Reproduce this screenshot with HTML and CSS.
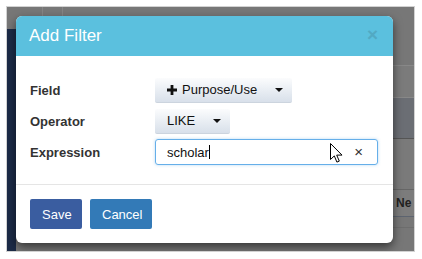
FILE: index.html
```html
<!DOCTYPE html>
<html lang="en">
<head>
    <meta charset="UTF-8">
    <title>Add Filter</title>
    <link rel="stylesheet" href="styles.css">
</head>
<body>
<div class="screen">
    <div class="page">
        <div class="side"></div>
        <div class="main">
            <div class="cols"><span></span><span></span></div>
            <div class="band band-a"></div>
            <div class="band band-b"></div>
            <div class="band band-c"></div>
            <div class="band band-d"></div>
            <div class="band band-e"><span class="cell">Ne</span></div>
            <div class="band band-f"></div>
        </div>
    </div>

    <div class="modal">
        <div class="modal-header">
            <h4>Add Filter</h4>
            <span class="close">&times;</span>
        </div>

        <div class="modal-body">
            <div class="row">
                <label>Field</label>
                <button class="dd">
                    <svg class="plus" width="10" height="10" viewBox="0 0 10 10"><path d="M3.6 0h2.8v3.6H10v2.8H6.4V10H3.6V6.4H0V3.6h3.6z" fill="#111"/></svg>
                    Purpose/Use <span class="caret"></span>
                </button>
            </div>
            <div class="row">
                <label>Operator</label>
                <button class="dd">LIKE <span class="caret"></span></button>
            </div>
            <div class="row">
                <label>Expression</label>
                <div class="input">
                    <span>scholar</span><span class="text-cursor"></span>
                    <span class="clear">&times;</span>
                    <svg class="pointer" width="13" height="20" viewBox="0 0 13 20"><path d="M0.5 0.5v16l3.8-3.6 2.6 6.2 2.4-1-2.6-6h5.3z" fill="#fff" stroke="#000" stroke-width="1"/></svg>
                </div>
            </div>
        </div>

        <div class="modal-footer">
            <button class="btn save">Save</button>
            <button class="btn cancel">Cancel</button>
        </div>
    </div>
</div>
</body>
</html>
```

FILE: styles.css
```css
body {
    margin: 0;
    background: #fff;
    font-family: "Liberation Sans", Arial, sans-serif;
}

.screen {
    position: relative;
    width: 409px;
    height: 246px;
    margin: 6px 0 0 6px;
    border: 1px solid #d2d2d2;
    box-sizing: border-box;
    overflow: hidden;
}

.page {
    display: flex;
    height: 100%;
    background: #777;
}

.side {
    width: 9px;
    margin-top: 22px;
    background: #1c2b47;
}

.main {
    flex: 1;
    display: flex;
    flex-direction: column;
}

.cols {
    height: 10px;
    display: flex;
    gap: 19px;
    padding-left: 26px;
}

.cols span {
    width: 1px;
    background: #858585;
}

.band {
    border-bottom: 1px solid #888;
}

.band-a { height: 48px; }
.band-b { height: 31px; background: #7b7b7b; }
.band-c { height: 40px; background: #6b6e74; border-bottom-color: #555; }
.band-d { height: 50px; background: #7a7a7a; border-bottom-color: #666; }

.band-e {
    height: 26px;
    background: #7c7c7c;
    border-bottom-color: #5d6470;
    display: flex;
    justify-content: flex-end;
}

.cell {
    width: 18px;
    border-left: 1px solid #6a6a6a;
    padding-left: 5px;
    font-weight: bold;
    font-size: 12px;
    line-height: 26px;
    color: #222;
    overflow: hidden;
}

.band-f { height: 10px; border-bottom-color: #6d6d6d; }

/* dialog */

.modal {
    position: absolute;
    left: 9px;
    top: 9px;
    width: 377px;
    background: #fff;
    border-radius: 6px;
    box-shadow: 0 4px 10px rgba(0, 0, 0, .55);
    overflow: hidden;
}

.modal-header {
    height: 40px;
    background: #5bc0de;
    display: flex;
    align-items: center;
    justify-content: space-between;
    padding: 0 15px 0 13px;
}

.modal-header h4 {
    margin: 0;
    font-weight: normal;
    font-size: 17px;
    color: #fff;
}

.close {
    font-size: 19px;
    font-weight: bold;
    line-height: 1;
    margin-top: -3px;
    color: #52a9c3;
}

.modal-body {
    padding: 21px 14px 19px;
    display: flex;
    flex-direction: column;
    gap: 5px;
}

.row {
    display: flex;
    align-items: center;
    height: 26px;
}

.row label {
    width: 125px;
    font-weight: bold;
    font-size: 13px;
    color: #333;
}

.dd {
    height: 25px;
    display: flex;
    align-items: center;
    gap: 4px;
    padding: 0 9px 0 12px;
    border: none;
    border-bottom: 1px solid #ccd4de;
    border-radius: 2px;
    background: linear-gradient(#fbfcfd, #d8e0ea);
    font-family: inherit;
    font-size: 13px;
    color: #111;
}

.caret {
    margin-left: 14px;
    border-top: 4px solid #111;
    border-left: 4px solid transparent;
    border-right: 4px solid transparent;
}

.plus {
    margin-right: 1px;
}

.input {
    position: relative;
    width: 223px;
    height: 26px;
    box-sizing: border-box;
    border: 1px solid #66afe9;
    border-radius: 3px;
    box-shadow: 0 0 3px rgba(102, 175, 233, .5);
    display: flex;
    align-items: center;
    padding-left: 11px;
    font-size: 13px;
    color: #111;
}

.text-cursor {
    width: 1px;
    height: 14px;
    background: #000;
}

.clear {
    position: absolute;
    right: 14px;
    top: 3px;
    font-size: 15px;
    color: #333;
}

.pointer {
    position: absolute;
    left: 174px;
    top: 3px;
}

.modal-footer {
    border-top: 1px solid #e5e5e5;
    padding: 14px 14px 14px;
    display: flex;
    gap: 8px;
}

.btn {
    height: 30px;
    border: none;
    border-radius: 2px;
    color: #fff;
    font-family: inherit;
    font-size: 13px;
    padding: 0 12px;
}

.save {
    width: 52px;
    background: #3a5da0;
}

.cancel {
    width: 62px;
    background: #337ab7;
}
```
